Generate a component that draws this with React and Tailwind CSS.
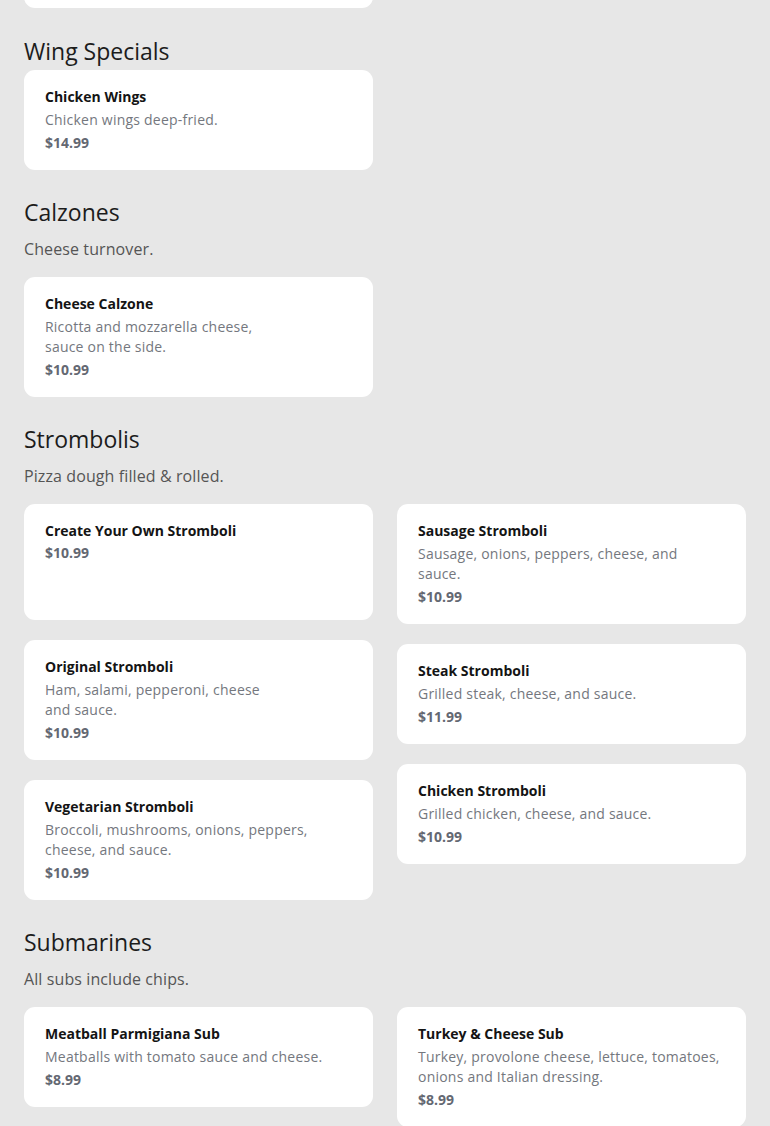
const sections = [
  {
    title: 'Wing Specials',
    columns: [
      [{ name: 'Chicken Wings', desc: 'Chicken wings deep-fried.', price: '$14.99' }],
    ],
  },
  {
    title: 'Calzones',
    note: 'Cheese turnover.',
    columns: [
      [{ name: 'Cheese Calzone', desc: 'Ricotta and mozzarella cheese,\nsauce on the side.', price: '$10.99' }],
    ],
  },
  {
    title: 'Strombolis',
    note: 'Pizza dough filled & rolled.',
    columns: [
      [
        { name: 'Create Your Own Stromboli', price: '$10.99', tall: true },
        { name: 'Original Stromboli', desc: 'Ham, salami, pepperoni, cheese\nand sauce.', price: '$10.99' },
        { name: 'Vegetarian Stromboli', desc: 'Broccoli, mushrooms, onions, peppers,\ncheese, and sauce.', price: '$10.99' },
      ],
      [
        { name: 'Sausage Stromboli', desc: 'Sausage, onions, peppers, cheese, and\nsauce.', price: '$10.99' },
        { name: 'Steak Stromboli', desc: 'Grilled steak, cheese, and sauce.', price: '$11.99' },
        { name: 'Chicken Stromboli', desc: 'Grilled chicken, cheese, and sauce.', price: '$10.99' },
      ],
    ],
  },
  {
    title: 'Submarines',
    note: 'All subs include chips.',
    columns: [
      [{ name: 'Meatball Parmigiana Sub', desc: 'Meatballs with tomato sauce and cheese.', price: '$8.99' }],
      [{ name: 'Turkey & Cheese Sub', desc: 'Turkey, provolone cheese, lettuce, tomatoes,\nonions and Italian dressing.', price: '$8.99' }],
    ],
  },
];

function ItemCard({ item }) {
  return (
    <div className={`rounded-[11px] bg-white px-[21px] py-[17px] ${item.tall ? 'min-h-[116px]' : ''}`}>
      <p className="text-[14px] leading-[20px] font-bold text-[#141414]">{item.name}</p>
      {item.desc && (
        <p className="mt-[3px] whitespace-pre-line text-[14px] leading-[20px] tracking-[0.22px] text-[#74777e]">{item.desc}</p>
      )}
      <p className={`${item.desc ? 'mt-[3px]' : 'mt-[2px]'} text-[14px] leading-[20px] font-bold text-[#646872]`}>{item.price}</p>
    </div>
  );
}

export default function App() {
  return (
    <div className="min-h-screen overflow-hidden bg-[#e7e7e7] px-6 pb-10 font-['Open_Sans',sans-serif]">
      {/* tail of the previous section, scrolled past */}
      <div className="grid grid-cols-2 gap-6">
        <div className="-mt-[92px] h-[100px] rounded-[11px] bg-white" />
      </div>

      {sections.map((section, idx) => (
        <section key={section.title} className={idx === 0 ? 'mt-[27px]' : 'mt-[26px]'}>
          <h2 className="text-[23px] leading-[32px] text-[#1c1c1c]">{section.title}</h2>
          {section.note && (
            <p className="mt-[9px] mb-[16px] text-[16px] leading-[24px] tracking-[0.1px] text-[#555555]">{section.note}</p>
          )}
          <div className="mt-[3px] grid grid-cols-2 items-start gap-6">
            {section.columns.map((col, i) => (
              <div key={i} className="flex flex-col gap-5">
                {col.map((item) => (
                  <ItemCard key={item.name} item={item} />
                ))}
              </div>
            ))}
          </div>
        </section>
      ))}
    </div>
  );
}
